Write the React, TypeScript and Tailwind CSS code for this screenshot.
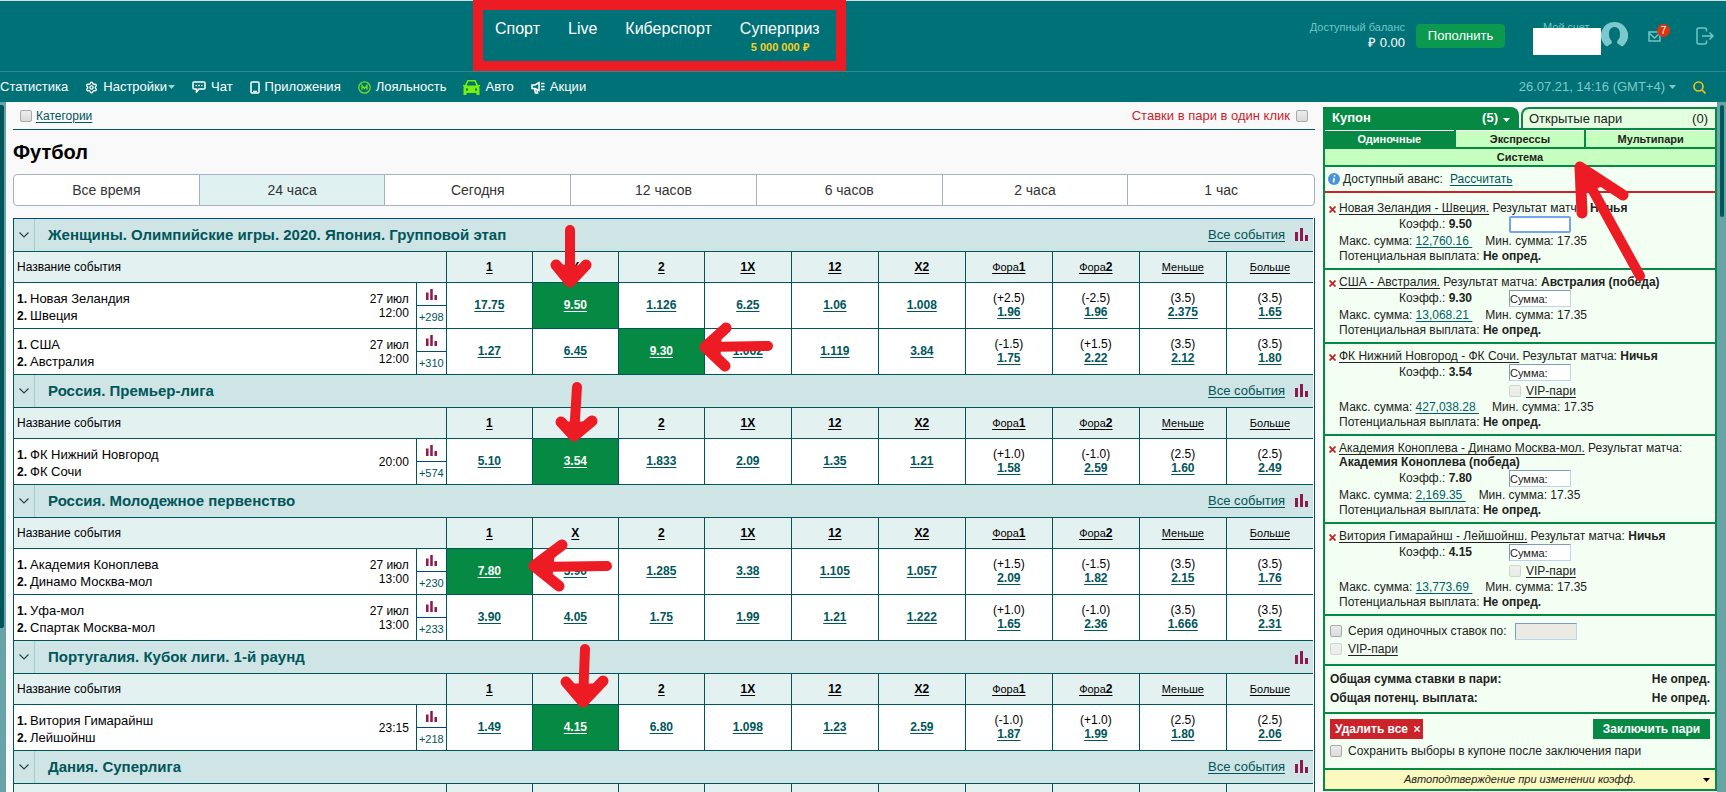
import {Fragment} from "react";
import type {ReactNode} from "react";
import {clsx} from "clsx";

type Odd = string | [string, string];

type Match = {
  home: string;
  away: string;
  date?: string;
  time: string;
  more: string;
  odds: Odd[];
  picked?: number;
};

type League = {
  title: string;
  allEvents: boolean;
  matches: Match[];
};

type Bet = {
  event: string;
  pick: string;
  odd: string;
  max: string;
  vip?: boolean;
  focused?: boolean;
};

const periods = ["Все время", "24 часа", "Сегодня", "12 часов", "6 часов", "2 часа", "1 час"];

const leagues: League[] = [
  {
    title: "Женщины. Олимпийские игры. 2020. Япония. Групповой этап",
    allEvents: true,
    matches: [
      {
        home: "Новая Зеландия",
        away: "Швеция",
        date: "27 июл",
        time: "12:00",
        more: "+298",
        odds: ["17.75", "9.50", "1.126", "6.25", "1.06", "1.008", ["(+2.5)", "1.96"], ["(-2.5)", "1.96"], ["(3.5)", "2.375"], ["(3.5)", "1.65"]],
        picked: 1,
      },
      {
        home: "США",
        away: "Австралия",
        date: "27 июл",
        time: "12:00",
        more: "+310",
        odds: ["1.27", "6.45", "9.30", "1.062", "1.119", "3.84", ["(-1.5)", "1.75"], ["(+1.5)", "2.22"], ["(3.5)", "2.12"], ["(3.5)", "1.80"]],
        picked: 2,
      },
    ],
  },
  {
    title: "Россия. Премьер-лига",
    allEvents: true,
    matches: [
      {
        home: "ФК Нижний Новгород",
        away: "ФК Сочи",
        time: "20:00",
        more: "+574",
        odds: ["5.10", "3.54", "1.833", "2.09", "1.35", "1.21", ["(+1.0)", "1.58"], ["(-1.0)", "2.59"], ["(2.5)", "1.60"], ["(2.5)", "2.49"]],
        picked: 1,
      },
    ],
  },
  {
    title: "Россия. Молодежное первенство",
    allEvents: true,
    matches: [
      {
        home: "Академия Коноплева",
        away: "Динамо Москва-мол",
        date: "27 июл",
        time: "13:00",
        more: "+230",
        odds: ["7.80", "5.90", "1.285", "3.38", "1.105", "1.057", ["(+1.5)", "2.09"], ["(-1.5)", "1.82"], ["(3.5)", "2.15"], ["(3.5)", "1.76"]],
        picked: 0,
      },
      {
        home: "Уфа-мол",
        away: "Спартак Москва-мол",
        date: "27 июл",
        time: "13:00",
        more: "+233",
        odds: ["3.90", "4.05", "1.75", "1.99", "1.21", "1.222", ["(+1.0)", "1.65"], ["(-1.0)", "2.36"], ["(3.5)", "1.666"], ["(3.5)", "2.31"]],
      },
    ],
  },
  {
    title: "Португалия. Кубок лиги. 1-й раунд",
    allEvents: false,
    matches: [
      {
        home: "Витория Гимарайнш",
        away: "Лейшойнш",
        time: "23:15",
        more: "+218",
        odds: ["1.49", "4.15", "6.80", "1.098", "1.23", "2.59", ["(-1.0)", "1.87"], ["(+1.0)", "1.99"], ["(2.5)", "1.80"], ["(2.5)", "2.06"]],
        picked: 1,
      },
    ],
  },
  {title: "Дания. Суперлига", allEvents: true, matches: []},
];

const bets: Bet[] = [
  {event: "Новая Зеландия - Швеция.", pick: "Ничья", odd: "9.50", max: "12,760.16", focused: true},
  {event: "США - Австралия.", pick: "Австралия (победа)", odd: "9.30", max: "13,068.21"},
  {event: "ФК Нижний Новгород - ФК Сочи.", pick: "Ничья", odd: "3.54", max: "427,038.28", vip: true},
  {event: "Академия Коноплева - Динамо Москва-мол.", pick: "Академия Коноплева (победа)", odd: "7.80", max: "2,169.35"},
  {event: "Витория Гимарайнш - Лейшойнш.", pick: "Ничья", odd: "4.15", max: "13,773.69", vip: true},
];

const columns: ReactNode[] = [
  <b>1</b>,
  <b>X</b>,
  <b>2</b>,
  <b>1X</b>,
  <b>12</b>,
  <b>X2</b>,
  <span className="text-[11px]">Фора<b className="text-xs">1</b></span>,
  <span className="text-[11px]">Фора<b className="text-xs">2</b></span>,
  <span className="text-[11px]">Меньше</span>,
  <span className="text-[11px]">Больше</span>,
];

function Bars({size}: {size: number}) {
  return (
    <svg width={size} height={size} viewBox="0 0 13 13" fill="#8c1a4b" aria-hidden="true">
      <path d="M0 4h3v9H0zM5 0h3v13H5zM10 7h3v6h-3z"/>
    </svg>
  );
}

function Caret({className}: {className?: string}) {
  return (
    <svg width="7" height="4" viewBox="0 0 7 4" className={className} fill="currentColor" aria-hidden="true">
      <path d="M0 0h7L3.5 4z"/>
    </svg>
  );
}

function Checkbox({id, disabled}: {id: string; disabled?: boolean}) {
  return (
    <input
      type="checkbox"
      id={id}
      disabled={disabled}
      className="size-3 shrink-0 appearance-none rounded-xs border border-[#a9a9a9] bg-linear-to-b from-[#ececec] to-[#dadada] disabled:border-[#d3d3cd] disabled:from-[#f0f0ec] disabled:to-[#e9ece6]"
    />
  );
}

function NavItem({icon, children}: {icon?: ReactNode; children: ReactNode}) {
  return (
    <a href="#" className="flex items-center gap-[5px]">
      {icon}
      {children}
    </a>
  );
}

function Header() {
  return (
    <header className="border-t border-[#cfe0e0] bg-[#007177] text-white">
      <div className="flex h-[70px] justify-between">
        <nav className="-mt-px ml-[473px] flex h-[71px] shrink-0 gap-7 border-10 border-[#ed1c24] px-3 pt-[9px] pr-4 text-base leading-5">
          <a href="#">Спорт</a>
          <a href="#">Live</a>
          <a href="#">Киберспорт</a>
          <a href="#" className="flex flex-col items-center">
            Суперприз
            <span className="text-[11px] leading-4 font-bold text-[#f5cf1d]">5 000 000 ₽</span>
          </a>
        </nav>

        <div className="flex pr-3">
          <div className="mt-[18px] text-right text-[11px] leading-4 text-[#72c5c9]">
            Доступный баланс
            <div className="text-[13px] leading-4 font-medium text-white">₽ 0.00</div>
          </div>
          <button className="mt-[23px] ml-[11px] h-6 w-[89px] rounded bg-[#0b994f] pb-px text-[13px] font-medium">
            Пополнить
          </button>
          <div className="mt-[18px] ml-7 w-[68px] text-[11px] text-[#72c5c9]">
            <div className="pl-[10px] leading-4 whitespace-nowrap">Мой счет</div>
            <div className="relative -mt-[7px] h-[27px] bg-white"/>
          </div>
          <svg className="mt-[21px]" width="27" height="27" viewBox="0 0 27 27" fill="#7cc9cd" aria-hidden="true">
            <path d="M13.500 0a13.500 13.500 0 0 0-10.500 22c1.500 1.500 2 2 3 2.500l5-3.500-.5-2.500C8.500 17 8 14.500 8 12c0-4 2-7 5.500-7s5.500 3 5.500 7c0 2.500-.5 5-2.500 6.500L16 21l5 3.500c1-.5 2-1.500 3-2.500A13.500 13.500 0 0 0 13.500 0z"/>
          </svg>
          <button aria-label="Сообщения" className="relative mt-[29px] ml-5 h-[13px] w-[14px]">
            <svg width="13" height="11" viewBox="0 0 13 11" fill="none" stroke="#72c5c9" strokeWidth="1.500">
              <path d="M1 1h11v9H1zM1 2l5.500 5L12 2"/>
            </svg>
            <span className="absolute -top-1.5 left-[9px] size-[13px] rounded-full bg-[#dc3410] text-center text-[10px] leading-[13px]">
              7
            </span>
          </button>
          <button aria-label="Выход" className="mt-[26px] ml-[34px] h-[18px]">
            <svg width="18" height="18" viewBox="0 0 18 18" fill="none" stroke="#72c5c9" strokeWidth="1.500">
              <path d="M10.500 4.500V3A2 2 0 0 0 8.500 1H3a2 2 0 0 0-2 2v12a2 2 0 0 0 2 2h5.500a2 2 0 0 0 2-2v-1.500M6 9h11M13.500 5.500L17 9l-3.500 3.500"/>
            </svg>
          </button>
        </div>
      </div>

      <div className="flex h-[31px] items-center justify-between border-t border-[#2b8a8e] pr-5">
        <nav className="flex items-center gap-[17px] text-[13px] font-medium">
          <NavItem>Статистика</NavItem>
          <NavItem
            icon={
              <svg width="13" height="13" viewBox="0 0 24 24" fill="none" stroke="currentColor" strokeWidth="2.500">
                <path d="M9.700 4.100a2.340 2.340 0 0 1 4.600 0 2.340 2.340 0 0 0 3.400 1.900 2.340 2.340 0 0 1 2.300 4 2.340 2.340 0 0 0 0 4 2.340 2.340 0 0 1-2.300 4 2.340 2.340 0 0 0-3.400 1.900 2.340 2.340 0 0 1-4.600 0 2.340 2.340 0 0 0-3.400-1.900 2.340 2.340 0 0 1-2.300-4 2.340 2.340 0 0 0 0-4 2.340 2.340 0 0 1 2.300-4 2.340 2.340 0 0 0 3.400-1.900z"/>
                <circle cx="12" cy="12" r="3"/>
              </svg>
            }
          >
            <span className="flex items-center gap-px">Настройки<Caret className="text-[#9fd0d2]"/></span>
          </NavItem>
          <NavItem
            icon={
              <svg width="14" height="12" viewBox="0 0 14 12" fill="none" stroke="currentColor" strokeWidth="1.500">
                <path d="M2 1h10q1 0 1 1v5q0 1-1 1H7l-2.500 3V8H2Q1 8 1 7V2q0-1 1-1zM3.500 4.500h1.500M6.250 4.500h1.500M9 4.500h1.500"/>
              </svg>
            }
          >
            Чат
          </NavItem>
          <NavItem
            icon={
              <svg width="10" height="13" viewBox="0 0 10 13" fill="none" stroke="currentColor" strokeWidth="1.500">
                <rect x="1" y="1" width="8" height="11" rx="1"/>
                <path d="M3 10.500h4"/>
              </svg>
            }
          >
            Приложения
          </NavItem>
          <NavItem
            icon={
              <svg width="13" height="13" viewBox="0 0 13 13" fill="none" stroke="#6ee01c" strokeWidth="1.300">
                <circle cx="6.500" cy="6.500" r="5.700"/>
                <path d="M4 8.800V4.500l2.500 3 2.500-3v4.300"/>
              </svg>
            }
          >
            Лояльность
          </NavItem>
          <NavItem
            icon={
              <svg width="17" height="15" viewBox="0 0 17 15" aria-hidden="true">
                <path d="M4.500 0h8L15 5h2v1.500h-1l.5 1.500v7h-3v-2h-10v2h-3V8L1 6.500H0V5h2zM5.300 1.500L3.700 5.500h9.600L11.700 1.500z" fill="#76f00a" fillRule="evenodd"/>
                <path d="M3 8.500h2v2H3zM12 8.500h2v2h-2z" fill="#007177"/>
              </svg>
            }
          >
            Авто
          </NavItem>
          <NavItem
            icon={
              <svg width="14" height="13" viewBox="0 0 14 13" fill="none" stroke="currentColor" strokeWidth="1.500">
                <path d="M1 4h3l4-2.500v8L4 7.500H1zM3.500 8l1 4h2l-.5-3M10 2.500h3.500M10 5.500h3.500M10 8.500h3.500"/>
              </svg>
            }
          >
            Акции
          </NavItem>
        </nav>

        <div className="flex items-center text-[13px] text-[#80c8cb]">
          <button className="flex items-center gap-1">26.07.21, 14:16 (GMT+4)<Caret/></button>
          <button aria-label="Поиск" className="ml-[17px]">
            <svg width="13" height="13" viewBox="0 0 13 13" fill="none" stroke="#f0c419" strokeWidth="1.600">
              <circle cx="5.500" cy="5.500" r="4.500"/>
              <path d="M8.800 8.800l3.700 3.700"/>
            </svg>
          </button>
        </div>
      </div>
    </header>
  );
}

function MatchRow({match}: {match: Match}) {
  return (
    <tr className="bg-white">
      <td className="h-[46px] border-t border-[#00565a] p-0 pr-[7px] pl-[3px]">
        <div className="flex items-center justify-between">
          <div className="pt-0.5 text-[13px] leading-[17px]">
            <div><b className="inline-block w-[13px] text-xs">1.</b>{match.home}</div>
            <div><b className="inline-block w-[13px] text-xs">2.</b>{match.away}</div>
          </div>
          <div className="text-right leading-[14px]">
            {match.date && <div>{match.date}</div>}
            <div>{match.time}</div>
          </div>
        </div>
      </td>
      <td className="border-t border-l border-[#00565a] p-0 text-center text-[11px] text-[#00565a]">
        <div className="flex h-[23px] items-center justify-center border-b border-[#004a7c]">
          <Bars size={11}/>
        </div>
        <div className="h-[22px] leading-[23px]">{match.more}</div>
      </td>
      {match.odds.map((odd, i) => {
        const value = typeof odd === "string" ? odd : odd[1];
        return (
          <td
            key={i}
            className={clsx(
              "border-t border-l border-[#00565a] p-0 pb-0.5 text-center leading-[14px]",
              i === match.picked && "bg-[#068942]"
            )}
          >
            {typeof odd !== "string" && <div>{odd[0]}</div>}
            <a
              href="#"
              className={clsx(
                "font-bold underline underline-offset-2",
                i === match.picked ? "text-white" : "text-[#00565a]"
              )}
            >
              {value}
            </a>
          </td>
        );
      })}
    </tr>
  );
}

function Events() {
  return (
    <div className="mt-3 border-x border-[#00565a] bg-white pr-px">
      <table className="w-full table-fixed border-separate border-spacing-0 text-xs text-black">
        <colgroup>
          <col/>
          <col className="w-[30px]"/>
          <col className="w-[86px]"/>
          <col className="w-[86px]"/>
          <col className="w-[86px]"/>
          <col className="w-[87px]"/>
          <col className="w-[87px]"/>
          <col className="w-[87px]"/>
          <col className="w-[87px]"/>
          <col className="w-[87px]"/>
          <col className="w-[87px]"/>
          <col className="w-[87px]"/>
        </colgroup>
        {leagues.map((league, n) => (
          <tbody key={league.title}>
            <tr className="bg-[#cfe4e4]">
              <th
                colSpan={12}
                className={clsx("h-[33px] border-t p-0 font-normal", n === 0 ? "border-[#004a7c]" : "border-[#00565a]")}
              >
                <div className="flex h-8 items-center text-[#00565a]">
                  <button aria-label="Свернуть" className="flex h-full w-[21px] items-center justify-center border-r border-[#a3cccc]">
                    <svg width="10" height="6" viewBox="0 0 10 6" fill="none" stroke="#24484a" strokeWidth="1.200">
                      <path d="M.5.500L5 5 9.500.500"/>
                    </svg>
                  </button>
                  <h2 className="ml-[13px] text-[15px] font-bold">{league.title}</h2>
                  <div className="mr-[5px] ml-auto flex items-center gap-[10px]">
                    {league.allEvents && (
                      <a href="#" className="text-[13px] font-medium underline underline-offset-2">Все события</a>
                    )}
                    <Bars size={13}/>
                  </div>
                </div>
              </th>
            </tr>
            <tr className="bg-[#e4f1f1]">
              <th colSpan={2} className="h-[31px] border-t border-[#00565a] p-0 pl-[3px] text-left font-normal">
                Название события
              </th>
              {columns.map((column, i) => (
                <th key={i} className="border-t border-l border-[#00565a] p-0 font-normal">
                  <a href="#" className="underline underline-offset-2">
                    <Fragment>{column}</Fragment>
                  </a>
                </th>
              ))}
            </tr>
            {league.matches.map((match) => (
              <MatchRow key={match.home} match={match}/>
            ))}
          </tbody>
        ))}
      </table>
    </div>
  );
}

function BetItem({bet, index}: {bet: Bet; index: number}) {
  return (
    <li className="flex border-b-2 border-[#068942] pt-[5px] pb-1 pl-1">
      <button aria-label="Удалить" className="flex h-4 w-[10px] shrink-0 items-center">
        <svg width="7" height="7" viewBox="0 0 7 7" stroke="#cc2229" strokeWidth="1.800">
          <path d="M.5.500l6 6M6.500.500l-6 6"/>
        </svg>
      </button>
      <div className="grow">
        <p className="mb-px leading-[14px]">
          <a href="#" className="text-[#222] underline underline-offset-2">{bet.event}</a> Результат матча: <b>{bet.pick}</b>
        </p>
        <div className="flex h-[18px]">
          <label htmlFor={`sum-${index}`} className="w-[133px] text-right leading-4">
            Коэфф.: <b>{bet.odd}</b>
          </label>
          <input
            id={`sum-${index}`}
            autoFocus={bet.focused}
            defaultValue={bet.focused ? "" : "Сумма:"}
            className={clsx(
              "ml-[37px] h-[17px] w-[62px] border bg-white text-[11px] outline-none",
              bet.focused
                ? "rounded-xs border-2 border-[#76a5f0]"
                : "border-t-[#7f9db9] border-r-[#b9d3f0] border-b-[#b9d3f0] border-l-[#7f9db9]"
            )}
          />
        </div>
        {bet.vip && (
          <div className="flex h-[18px] items-center gap-[5px] pl-[170px]">
            <Checkbox id={`vip-${index}`} disabled/>
            <label htmlFor={`vip-${index}`} className="underline underline-offset-2">VIP-пари</label>
          </div>
        )}
        <p className="flex gap-[13px] leading-[15px]">
          <span>
            Макс. сумма:{" "}
            <a href="#" className="whitespace-pre text-[#006165] underline underline-offset-2">{bet.max + " "}</a>
          </span>
          <span>Мин. сумма: 17.35</span>
        </p>
        <p className="leading-[15px]">Потенциальная выплата: <b>Не опред.</b></p>
      </div>
    </li>
  );
}

function Coupon() {
  return (
    <aside className="mt-[5px] w-[394px] shrink-0 self-start border-x-2 border-b-2 border-[#068942] bg-[#f4fff4] text-xs text-[#222]">
      {/* Tabs */}
      <div className="-mx-0.5 flex h-[21px] gap-0.5 bg-[#f9f9f9] text-[13px] font-bold">
        <button className="flex w-[196px] items-center rounded-tr-lg bg-[#068942] pr-[9px] pl-[9px] text-white">
          Купон
          <span className="ml-auto">(5)</span>
          <Caret className="mt-1 ml-[5px]"/>
        </button>
        <button className="flex grow items-center justify-between rounded-tl-lg border-x-2 border-t-2 border-[#068942] bg-[#e3ffe0] pr-[7px] pl-1.5 font-medium">
          Открытые пари
          <span>(0)</span>
        </button>
      </div>
      <div className="border-y-2 border-[#068942] bg-[#068942] text-[11px] font-bold">
        <div className="grid grid-cols-3 gap-0.5">
          <button className="h-[17px] border-t border-white bg-[#068942] text-white">Одиночные</button>
          <button className="h-[17px] border-t border-white bg-[#c6ffbf]">Экспрессы</button>
          <button className="h-[17px] border-t border-white bg-[#c6ffbf]">Мультипари</button>
        </div>
        <button className="mt-0.5 block h-4 w-full bg-[#c6ffbf]">Система</button>
      </div>

      <div className="flex h-[26px] items-center border-b-2 border-[#cc2229] pl-[3px]">
        <svg width="12" height="12" viewBox="0 0 12 12" aria-hidden="true">
          <circle cx="6" cy="6" r="6" fill="#4a92da"/>
          <path d="M6.700 2.200l-.3 1.500M6.200 5L5.400 9.500" stroke="#fff" strokeWidth="1.600"/>
        </svg>
        <span className="ml-[3px]">Доступный аванс:</span>
        <a href="#" className="ml-[7px] text-[#00565a] underline underline-offset-2">Рассчитать</a>
      </div>

      <ul className="pt-[3px]">
        {bets.map((bet, i) => (
          <BetItem key={bet.event} bet={bet} index={i}/>
        ))}
      </ul>

      <div className="border-b-2 border-[#068942] px-[5px] py-1.5">
        <div className="flex h-[18px] items-center">
          <Checkbox id="series"/>
          <label htmlFor="series" className="ml-1.5">Серия одиночных ставок по:</label>
          <input
            aria-label="Сумма серии"
            disabled
            className="ml-2 h-[17px] w-[62px] border border-t-[#7f9db9] border-r-[#b9d3f0] border-b-[#b9d3f0] border-l-[#7f9db9] bg-[#ebebe4]"
          />
        </div>
        <div className="flex h-[18px] items-center">
          <Checkbox id="vip-all" disabled/>
          <label htmlFor="vip-all" className="ml-1.5 underline underline-offset-2">VIP-пари</label>
        </div>
      </div>

      <dl className="grid grid-cols-[1fr_auto] border-b-2 border-[#068942] px-[5px] py-1 leading-[19px] font-bold">
        <dt>Общая сумма ставки в пари:</dt>
        <dd>Не опред.</dd>
        <dt>Общая потенц. выплата:</dt>
        <dd>Не опред.</dd>
      </dl>

      <div className="border-b-2 border-[#068942] px-[5px] pt-[5px] pb-[9px]">
        <div className="flex justify-between leading-5 font-bold text-white">
          <button className="flex w-[93px] items-center justify-between bg-[#cc2229] pr-[3px] pl-[5px]">
            Удалить все
            <svg width="6" height="6" viewBox="0 0 7 7" stroke="#fff" strokeWidth="1.800">
              <path d="M.5.500l6 6M6.500.500l-6 6"/>
            </svg>
          </button>
          <button className="w-[117px] bg-[#068942]">Заключить пари</button>
        </div>
        <div className="mt-1 flex h-4 items-center gap-1.5">
          <Checkbox id="keep"/>
          <label htmlFor="keep">Сохранить выборы в купоне после заключения пари</label>
        </div>
      </div>

      <button className="flex h-[19px] w-full items-center bg-[#fbf9bf] pr-[5px] pl-3 text-[11px] italic">
        <span className="grow">Автоподтверждение при изменении коэфф.</span>
        <Caret className="text-black"/>
      </button>
    </aside>
  );
}

function Arrows() {
  return (
    <svg
      className="pointer-events-none absolute top-0 left-0"
      width="1726"
      height="792"
      viewBox="0 0 1726 792"
      fill="none"
      stroke="#ed1c24"
      strokeWidth="10"
      strokeLinecap="round"
      strokeLinejoin="round"
      aria-hidden="true"
    >
      <path d="M570 230V281M768 346L706 347M577 387L574 435M607 566L535 567M585 649L583 701M1640 276L1580 167"/>
      <path d="M556 265L570 282L586 265M726 328L705 347L725 366M561 422L574 436L592 421M562 545L534 566L559 586M566 682L583 702L603 681M1623 195L1580 167L1582 213" strokeWidth="11"/>
      <path d="M562 267L570 281L579 268ZM719 338L707 347L718 357ZM567 424L574 434L585 424ZM552 556L538 566L550 577ZM574 686L583 699L594 686ZM1585 190L1583 170L1602 184Z" fill="#ed1c24" strokeWidth="5"/>
    </svg>
  );
}

export default function App() {
  return (
    <div className="relative flex h-screen flex-col overflow-hidden bg-[#f9f9f9] font-['Liberation_Sans',Arial,sans-serif]">
      <Header/>

      <div className="flex min-h-0 grow overflow-hidden">
        <div className="w-1.5 shrink-0 bg-[#67a4a8] pt-[3px]">
          <div className="h-[523px] w-1 rounded-r-xs bg-[#00565a]"/>
        </div>

        <main className="min-w-0 grow pr-2 pl-[7px]">
          <div className="flex h-7 items-center justify-between border-b border-[#00565a] px-[7px]">
            <div className="flex items-center gap-1 text-xs text-[#00565a]">
              <Checkbox id="categories"/>
              <label htmlFor="categories" className="underline underline-offset-2">Категории</label>
            </div>
            <div className="flex items-center gap-1.5 text-[13px] font-medium text-[#cc2229]">
              <label htmlFor="one-click">Ставки в пари в один клик</label>
              <Checkbox id="one-click"/>
            </div>
          </div>

          <h1 className="mt-[10px] mb-[10px] text-xl leading-6 font-bold text-black">Футбол</h1>

          <div className="grid h-8 grid-cols-7 divide-x divide-[#a5b1c4] overflow-hidden rounded border border-[#a5b1c4] bg-white text-sm text-[#333]">
            {periods.map((period, i) => (
              <button key={period} className={clsx(i === 1 && "bg-[#e0f1f1]")}>{period}</button>
            ))}
          </div>

          <Events/>
        </main>

        <Coupon/>

        <div className="w-[9px] shrink-0 bg-[#67a4a8] pt-[3px]">
          <div className="mx-auto h-28 w-1 rounded-xs bg-[#00565a]"/>
        </div>
      </div>

      <Arrows/>
    </div>
  );
}
